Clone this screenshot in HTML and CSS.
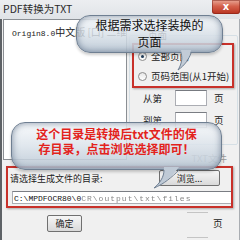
FILE: index.html
```html
<!DOCTYPE html>
<html lang="zh-CN">
<head>
    <meta charset="UTF-8">
    <title>PDF转换为TXT</title>
    <link rel="stylesheet" href="styles.css">
</head>
<body>

    <div class="window">
        <!-- Title bar -->
        <div class="titlebar">
            <span class="title">PDF转换为TXT</span>
            <span class="close">x</span>
        </div>

        <div class="client">
            <!-- File list -->
            <div class="listbox">
                <span class="mono">Origin8.0</span>中文版 [口] 二维
            </div>

            <!-- Page options -->
            <div class="side">
                <fieldset class="pages">
                    <legend>页面</legend>
                    <div class="radio-row"><span class="radio checked"></span>全部页面</div>
                    <div class="radio-row"><span class="radio"></span>页码范围(从1开始)</div>
                    <div class="range-row">
                        <span class="range-label">从第</span>
                        <span class="edit range-edit"></span>
                        <span>页</span>
                    </div>
                    <div class="range-row">
                        <span class="range-label">到第</span>
                        <span class="edit range-edit"></span>
                        <span>页</span>
                    </div>
                </fieldset>
                <div class="ghost-label">TXT文件</div>
            </div>

            <!-- Output folder -->
            <div class="dir">
                <div class="dir-head">
                    <span>请选择生成文件的目录:</span>
                    <span class="btn browse">浏览...</span>
                </div>
                <div class="edit path">
                    <span class="mono">C:\MPDFOCR80\0</span><span class="mono smear">CR\output\txt\files</span>
                </div>
            </div>

            <!-- Buttons -->
            <div class="actions">
                <span class="btn ok">确定</span>
                <span class="ghost-edit"></span>
                <span class="ghost-page">页</span>
            </div>
        </div>

        <!-- Red highlight frames -->
        <div class="mark mark-pages"></div>
        <div class="mark mark-dir"></div>

        <!-- Callouts -->
        <div class="bubble bubble-pages">
            根据需求选择装换的<br>页面
            <svg class="tail tail-pages" width="20" height="24" viewBox="0 0 20 24">
                <path d="M6 1 C 8 10, 6 16, 3 21 C 10 16, 14 10, 16 1 Z" fill="#c2ccd7"/>
                <path d="M6 4 C 8 10, 6 16, 3 21 C 10 16, 14 10, 16 4" fill="none" stroke="#6f7f92" stroke-width="1"/>
            </svg>
        </div>
        <div class="bubble bubble-dir">
            这个目录是转换后txt文件的保<br>存目录，点击浏览选择即可！
            <svg class="tail tail-dir" width="30" height="24" viewBox="0 0 30 24">
                <path d="M12 0 C 12 10, 8 16, 2 21 C 12 17, 20 10, 27 0 Z" fill="#bfcad6"/>
                <path d="M12 3 C 12 10, 8 16, 2 21 C 12 17, 20 10, 27 3" fill="none" stroke="#6f7f92" stroke-width="1"/>
            </svg>
        </div>
    </div>

</body>
</html>
```

FILE: styles.css
```css
/* Base */
body {
    margin: 0;
    font-family: "Noto Sans CJK SC", "Noto Sans", sans-serif;
    background-color: #f0f0f0;
    color: #222;
    overflow: hidden;
}

.mono {
    font-family: "Liberation Mono", "Noto Sans CJK SC", monospace;
    font-size: 8px;
}

.window {
    position: relative;
    width: 240px;
    height: 240px;
    display: flex;
    flex-direction: column;
    background-color: #f0f0f0;
}

/* Title bar */
.titlebar {
    height: 19px;
    flex-shrink: 0;
    display: flex;
    justify-content: space-between;
    align-items: flex-start;
    background: linear-gradient(to bottom, #eceef1, #e0e3e7);
}
.title {
    padding: 2px 0 0 3px;
    font-size: 10.5px;
    line-height: 13px;
    color: #2a2a2a;
}
.close {
    width: 28px;
    height: 14px;
    border-radius: 0 0 3px 3px;
    background: linear-gradient(to bottom, #e9a796 0%, #d4604b 45%, #b8321f 100%);
    box-shadow: inset 0 0 0 1px rgba(120, 30, 20, 0.5);
    color: white;
    font-family: "DejaVu Sans", sans-serif;
    font-weight: bold;
    font-size: 10px;
    line-height: 13px;
    text-align: center;
}

/* Client area */
.client {
    flex: 1;
    display: grid;
    grid-template-columns: 124px 1fr;
    grid-template-rows: 141px 50px 1fr;
    column-gap: 2px;
    padding-left: 1px;
    border-left: 2px solid #5e6266;
    border-right: 1px solid #a9adb2;
}

.listbox {
    background-color: white;
    border: 1px solid #8b8f94;
    padding: 5px 0 0 8px;
    font-size: 10px;
    line-height: 14px;
    white-space: nowrap;
    overflow: hidden;
}

/* Page group */
.side {
    display: flex;
    flex-direction: column;
}
.pages {
    margin: 10px 1px 0 0;
    padding: 9px 0 10px 8px;
    border: 1px solid #d5dfe5;
    border-radius: 2px;
    font-size: 9.5px;
    line-height: 13px;
}
.pages legend {
    margin-left: 8px;
    padding: 0 2px;
    font-size: 9.5px;
    line-height: 12px;
}

.radio-row {
    display: flex;
    align-items: center;
    gap: 4px;
    height: 13px;
    margin-bottom: 7px;
}
.radio {
    width: 7px;
    height: 7px;
    border: 1px solid #8c8c8c;
    border-radius: 50%;
    background: linear-gradient(to bottom, #e6e6e6, #ffffff);
    display: flex;
    align-items: center;
    justify-content: center;
}
.radio.checked::after {
    content: "";
    width: 3px;
    height: 3px;
    border-radius: 50%;
    background-color: #1f3b58;
}

.range-row {
    display: flex;
    align-items: center;
    height: 16px;
    margin: 4px 0 6px 5px;
}
.range-label {
    width: 19px;
    margin-right: 13px;
}
.range-edit {
    width: 32px;
    height: 16px;
    margin-right: 7px;
}

.edit {
    box-sizing: border-box;
    background-color: white;
    border: 1px solid #abadb3;
    border-top-color: #7a7d83;
}

.ghost-label {
    margin: 6px 12px 0 0;
    text-align: right;
    font-size: 9.5px;
    color: #9a9a9a;
}

/* Output folder */
.dir {
    grid-column: 1 / -1;
    padding: 10px 0 0 7px;
    font-size: 9px;
}
.dir-head {
    display: flex;
    justify-content: space-between;
    align-items: center;
    padding-right: 19px;
}
.path {
    width: 220px;
    height: 13px;
    margin: 5px 0 0 2px;
    padding-left: 1px;
    line-height: 11px;
    white-space: nowrap;
    overflow: hidden;
    color: #111;
}
.smear {
    color: #888;
    letter-spacing: 1px;
    filter: blur(0.7px);
}

/* Buttons */
.btn {
    box-sizing: border-box;
    display: flex;
    align-items: center;
    justify-content: center;
    border: 1px solid #707070;
    border-radius: 2px;
    background: linear-gradient(to bottom, #f6f6f6 0%, #e8e8e8 50%, #d9d9d9 100%);
    font-size: 9px;
}
.browse {
    width: 61px;
    height: 16px;
}
.actions {
    grid-column: 1 / -1;
    display: flex;
    align-items: flex-start;
    padding: 5px 0 0 44px;
}
.ok {
    width: 35px;
    height: 17px;
}
.ghost-edit {
    box-sizing: border-box;
    width: 21px;
    height: 26px;
    margin: -3px 0 0 105px;
    border-top: 1px solid #c4c4c4;
    border-bottom: 1px solid #c4c4c4;
}
.ghost-page {
    margin: 1px 0 0 5px;
    font-size: 9.5px;
}

/* Red highlight frames */
.mark {
    position: absolute;
    box-sizing: border-box;
    border: 2px solid #c8312a;
    box-shadow: 1px 1px 2px rgba(0, 0, 0, 0.3);
}
.mark-pages {
    left: 132px;
    top: 43px;
    width: 102px;
    height: 45px;
}
.mark-dir {
    left: 6px;
    top: 166px;
    width: 227px;
    height: 42px;
}

/* Callouts */
.bubble {
    position: absolute;
    box-sizing: border-box;
    border: 1px solid #6f7f92;
    border-radius: 14px;
    background: linear-gradient(to bottom, rgba(248, 250, 252, 0.86) 0%, rgba(218, 226, 234, 0.84) 50%, rgba(186, 199, 212, 0.9) 100%);
    box-shadow: inset 0 0 7px rgba(80, 100, 125, 0.7), 0 2px 3px rgba(0, 0, 0, 0.2);
    text-align: center;
    font-size: 12px;
}
.bubble-pages {
    left: 76px;
    top: 15px;
    width: 147px;
    height: 38px;
    padding-top: 0;
    line-height: 17px;
    color: #111;
}
.bubble-dir {
    left: 11px;
    top: 122px;
    width: 211px;
    height: 48px;
    padding-top: 3px;
    line-height: 15px;
    color: #e3231c;
    font-weight: bold;
}

.tail {
    position: absolute;
}
.tail-pages {
    left: 98px;
    top: 33px;
}
.tail-dir {
    left: 140px;
    top: 44px;
}
```
